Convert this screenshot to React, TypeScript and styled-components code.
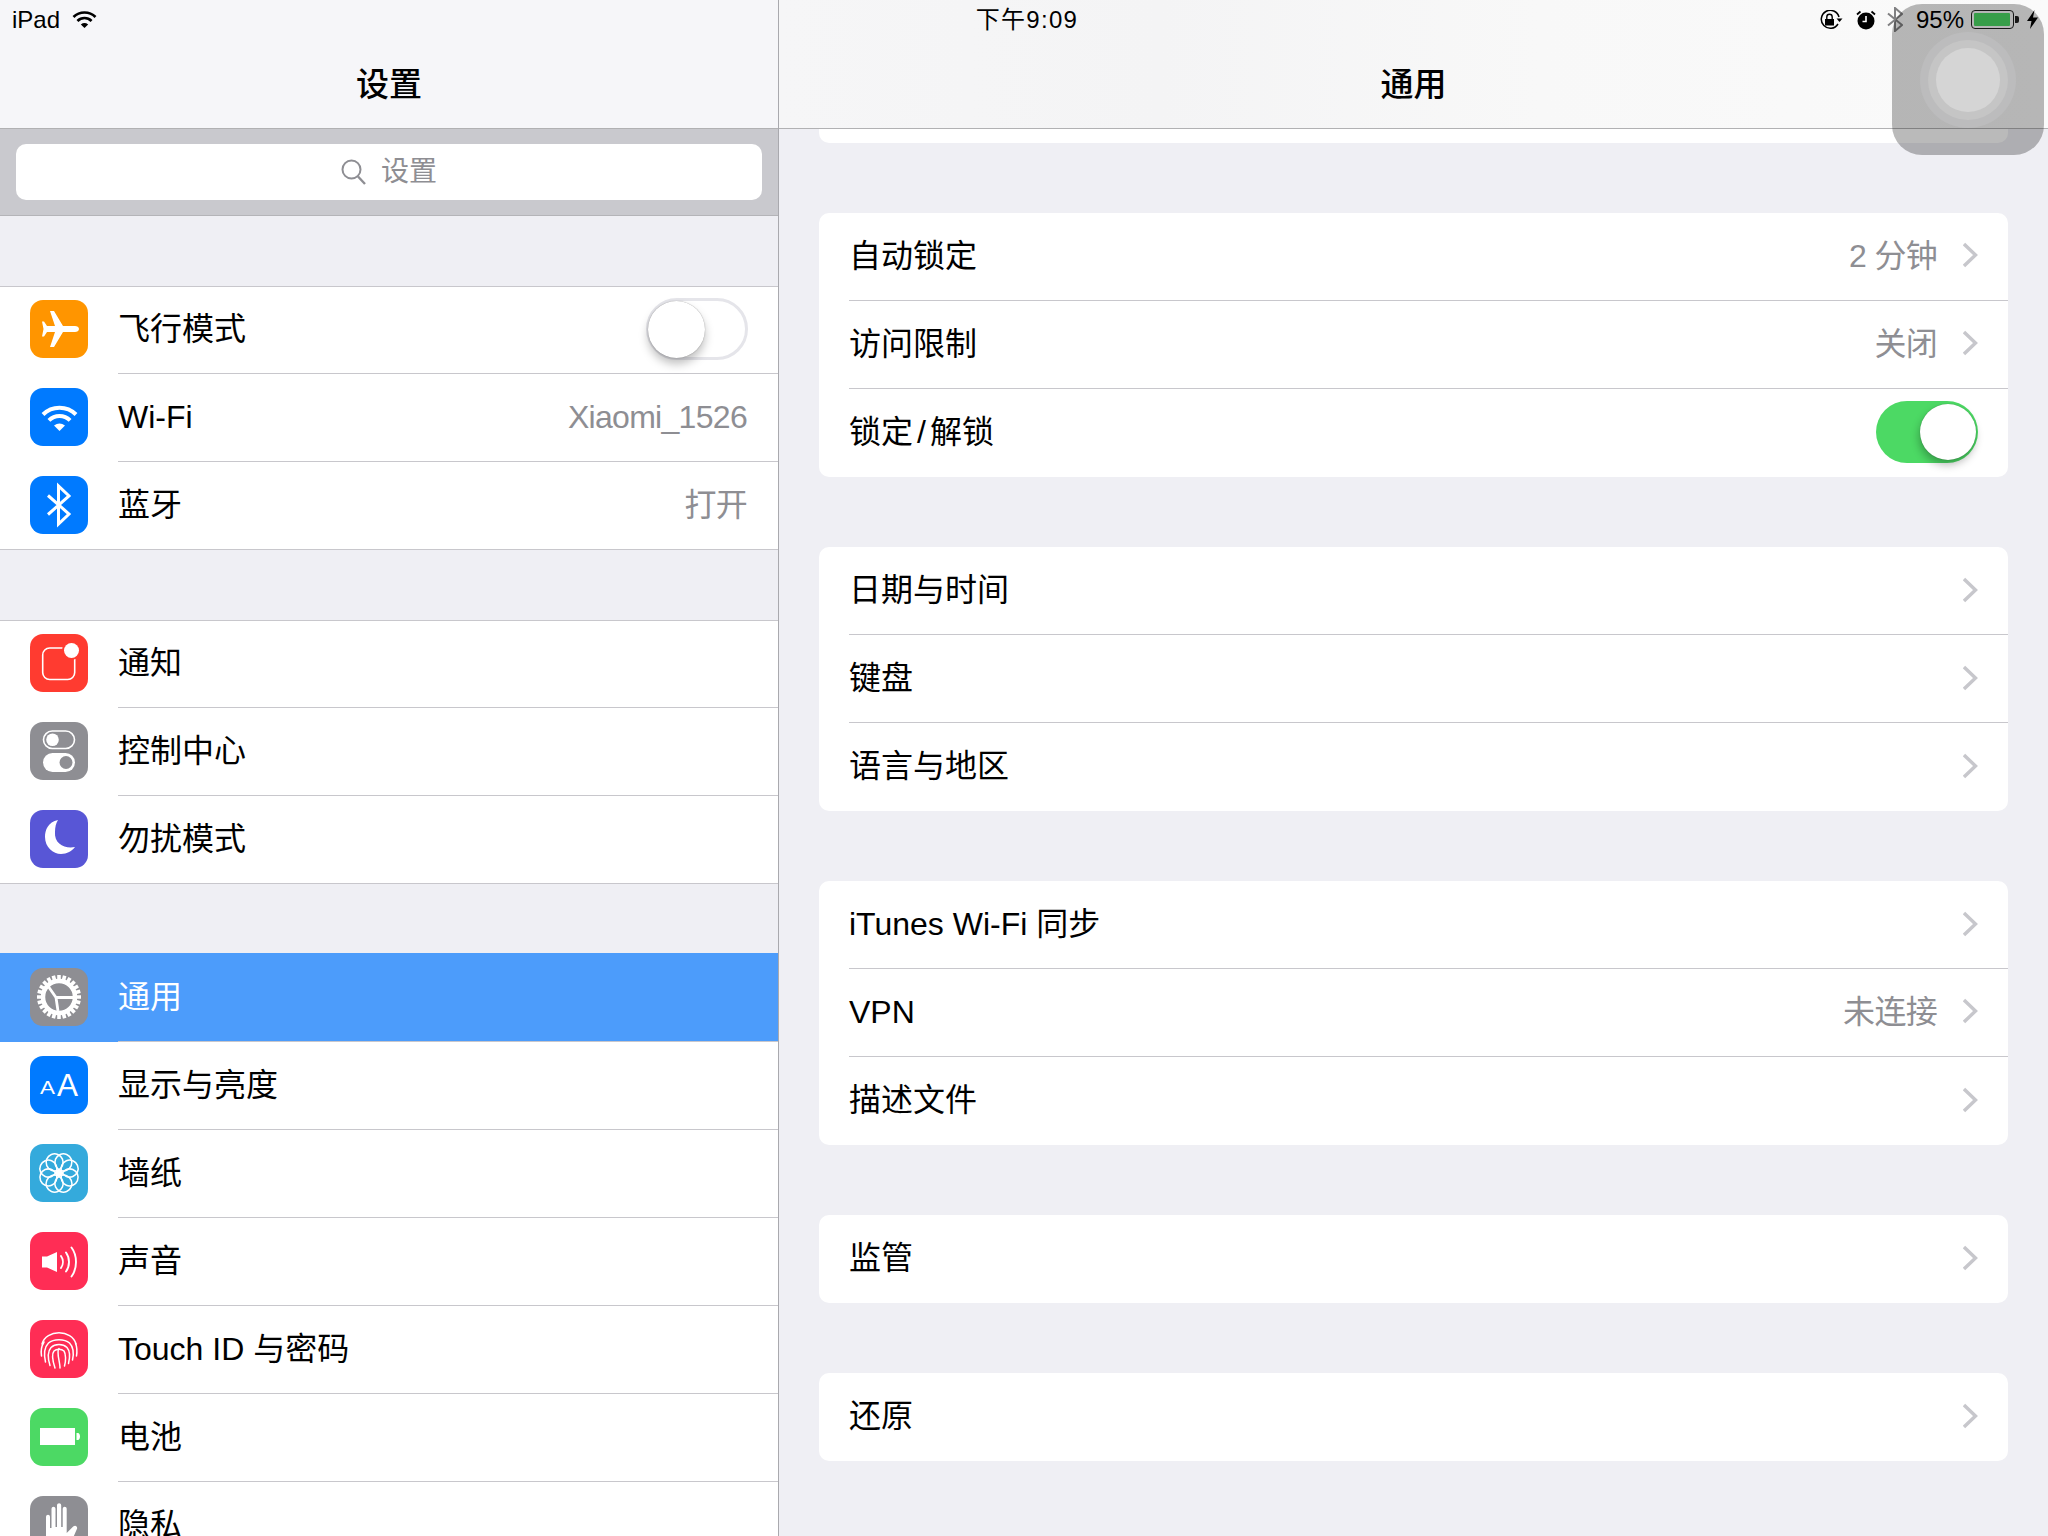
import React from 'react';
import styled, {createGlobalStyle} from 'styled-components';

const GlobalStyle = createGlobalStyle`
  * {
    box-sizing: border-box;
  }

  html, body {
    margin: 0;
    padding: 0;
    background: #efeff4;
  }

  body {
    font-family: "Liberation Sans", "Noto Sans CJK SC", sans-serif;
    line-height: 1.2;
    color: #000;
  }
`

const Screen = styled.div`
  position: relative;
  display: flex;
  width: 2048px;
  height: 1536px;
  overflow: hidden;
  background: #efeff4;
`

const Sidebar = styled.aside`
  flex: 0 0 779px;
  height: 100%;
  overflow: hidden;
  border-right: 1px solid #a9a9ae;
`

const Detail = styled.main`
  flex: 1;
  height: 100%;
  overflow: hidden;
`

const NavBar = styled.header<{$blur?: boolean}>`
  height: 129px;
  padding-top: 42px;
  display: flex;
  align-items: center;
  justify-content: center;
  border-bottom: 1px solid #b1b1b3;
  font-size: 33px;
  font-weight: 500;
  background: ${p => p.$blur
    ? 'linear-gradient(90deg, #f6f6f7 0%, #f4f4f5 30%, #f8f8f8 60%, #fafafa 100%)'
    : '#f6f6f9'};
`

const SearchBar = styled.div`
  height: 87px;
  padding: 15px 16px;
  background: #c9c9ce;
  border-bottom: 1px solid #b4b4b8;
`

const SearchField = styled.div`
  height: 56px;
  border-radius: 10px;
  background: #fff;
  display: flex;
  align-items: center;
  justify-content: center;
  gap: 15px;
  font-size: 28px;
  color: #8e8e93;
`

const SideList = styled.div`
  display: flex;
  flex-direction: column;
  gap: 70px;
  padding-top: 70px;
`

const Group = styled.section`
  background: #fff;
  box-shadow: inset 0 1px 0 #c8c7cc, inset 0 -1px 0 #c8c7cc;
`

const SideRow = styled.div<{$selected?: boolean}>`
  display: flex;
  align-items: center;
  height: ${p => p.$selected ? '89px' : '88px'};
  margin-top: ${p => p.$selected ? '-1px' : '0'};
  padding-left: 30px;
  gap: 30px;
  background: ${p => p.$selected ? '#4c9cfb' : 'transparent'};
  color: ${p => p.$selected ? '#fff' : '#000'};
`

const RowBody = styled.div<{$last?: boolean}>`
  flex: 1;
  align-self: stretch;
  display: flex;
  align-items: center;
  justify-content: space-between;
  padding-right: 30px;
  font-size: 32px;
  border-bottom: 1px solid ${p => p.$last ? 'transparent' : '#c8c7cc'};
`

const Slash = styled.span`
  margin: 0 4px;
`

const IconTile = styled.div<{$bg: string}>`
  flex: 0 0 58px;
  width: 58px;
  height: 58px;
  margin-bottom: 2px;
  border-radius: 13px;
  background: ${p => p.$bg};
  overflow: hidden;

  svg {
    display: block;
  }
`

const Value = styled.span`
  font-size: 32px;
  color: #8e8e93;
  letter-spacing: -0.7px;
  margin-right: 1px;
`

const Trailing = styled.div`
  display: flex;
  align-items: center;
  gap: 25px;

  svg {
    margin-bottom: 2px;
  }
`

const DetailList = styled.div`
  display: flex;
  flex-direction: column;
  gap: 70px;
  padding: 0 40px;
`

const Card = styled.section`
  background: #fff;
  border-radius: 10px;
  overflow: hidden;
`

const CardStub = styled.div`
  height: 14px;
  background: #fff;
  border-radius: 0 0 10px 10px;
`

const CardRow = styled.div`
  display: flex;
  height: 88px;
  padding-left: 30px;
`

const Track = styled.div<{$on?: boolean}>`
  display: flex;
  align-items: center;
  justify-content: ${p => p.$on ? 'flex-end' : 'flex-start'};
  width: 102px;
  height: 62px;
  margin-bottom: 1px;
  border-radius: 31px;
  padding: 0 2px;
  background: ${p => p.$on ? '#4cd964' : '#fff'};
  border: ${p => p.$on ? '0' : '3px solid #e5e5ea'};
`

const Knob = styled.div<{$on?: boolean}>`
  width: ${p => p.$on ? '56px' : '57px'};
  height: ${p => p.$on ? '56px' : '57px'};
  flex: none;
  border-radius: 50%;
  background: #fff;
  margin-left: ${p => p.$on ? '0' : '-3px'};
  box-shadow: ${p => p.$on
    ? '0 0 1px rgba(0,0,0,.35), -1px 5px 8px rgba(0,0,0,.28)'
    : '0 0 1px rgba(0,0,0,.45), 0 6px 10px rgba(0,0,0,.25)'};
`

const StatusBar = styled.div`
  position: absolute;
  top: 0;
  left: 0;
  width: 100%;
  height: 40px;
  display: grid;
  grid-template-columns: 1fr auto 1fr;
  align-items: center;
  padding: 0 10px 0 12px;
  font-size: 24px;
  color: #000;
`

const StatusLeft = styled.div`
  display: flex;
  align-items: center;
  gap: 12px;
`

const StatusTime = styled.div`
  margin-left: 4px;
  letter-spacing: 1.3px;
`

const StatusRight = styled.div`
  display: flex;
  align-items: center;
  justify-content: flex-end;
  gap: 11px;
`

const Percent = styled.span`
  margin-left: 2px;
`

const Battery = styled.div`
  display: flex;
  align-items: center;
  margin: 0 -3px 0 -4px;
`

const BatteryShell = styled.div`
  width: 43px;
  height: 19px;
  padding: 2px;
  border: 1.5px solid #222;
  border-radius: 4px;
`

const BatteryFill = styled.div`
  height: 100%;
  width: 97%;
  background: #4cd964;
  border-radius: 1px;
`

const BatteryNub = styled.div`
  width: 4px;
  height: 7px;
  background: #222;
  border-radius: 0 2px 2px 0;
  margin-left: 1px;
`

const AssistiveTouch = styled.div`
  position: absolute;
  top: 4px;
  right: 4px;
  width: 152px;
  height: 151px;
  border-radius: 30px;
  background: rgba(0, 0, 0, .27);
  display: flex;
  align-items: center;
  justify-content: center;
`

const TouchRing = styled.div<{$size: number; $fill: string}>`
  display: flex;
  align-items: center;
  justify-content: center;
  width: ${p => p.$size}px;
  height: ${p => p.$size}px;
  border-radius: 50%;
  background: ${p => p.$fill};
`

const Icon: React.FC<{children: React.ReactNode}> = ({children}) => (
    <svg width="58" height="58" viewBox="0 0 58 58" fill="none">{children}</svg>
)

const WifiArcs: React.FC<{color: string}> = ({color}) => (
    <>
        <path d="M13 26.5A23.4 23.4 0 0 1 46 26.5" stroke={color} strokeWidth="4"/>
        <path d="M18.9 32.4A15 15 0 0 1 40.1 32.4" stroke={color} strokeWidth="4"/>
        <path d="M29.5 43L24 37.6Q29.5 33.5 35 37.6Z" fill={color}/>
    </>
)

const Plane = () => (
    <Icon>
        <path fill="#fff" d="M49 29c0-2-2-3-4-3H33L24 11h-4l5 15h-8l-3-4.500h-2L13.500 29 12 36.500h2l3-4.500h8l-5 15h4l9-15h12c2 0 4-1 4-3z"/>
    </Icon>
)

const Wifi = () => <Icon><WifiArcs color="#fff"/></Icon>

const Bluetooth = () => (
    <Icon>
        <path d="M18 19.500L39 38 28.500 48V10L39 20 18 38.500" stroke="#fff" strokeWidth="3"/>
    </Icon>
)

const Notice = () => (
    <Icon>
        <rect x="12.700" y="14" width="32" height="31.500" rx="7" stroke="#fff" strokeWidth="1.600"/>
        <circle cx="41.500" cy="16.500" r="9.500" fill="#ff3b30"/>
        <circle cx="41.500" cy="16.500" r="7.500" fill="#fff"/>
    </Icon>
)

const Control = () => (
    <Icon>
        <rect x="13.500" y="9" width="31" height="17.500" rx="8.750" stroke="#fff" strokeWidth="1.600"/>
        <circle cx="22.500" cy="17.750" r="6.300" fill="#fff"/>
        <rect x="13" y="31" width="32" height="19" rx="9.500" fill="#fff"/>
        <circle cx="36" cy="40.500" r="6.500" fill="#8e8e93"/>
    </Icon>
)

const Moon = () => (
    <Icon>
        <path fill="#fff" d="M28 10C18 12 15 20 15 27c0 10 8 17 16 17 6 0 11-3 14-7-10 2-21-3-20-15 0-5 1-9 3-12z"/>
    </Icon>
)

const Gear = () => (
    <Icon>
        {Array.from({length: 24}, (_, i) => (
            <line key={i} x1="29" y1="7" x2="29" y2="13" stroke="#fff" strokeWidth="3.600"
                  transform={`rotate(${i * 15} 29 29)`}/>
        ))}
        <circle cx="29" cy="29" r="16" stroke="#fff" strokeWidth="4.500"/>
        <path d="M26 29.500L18 18M26 29.500H43M26 29.500L28 43" stroke="#fff" strokeWidth="2.800"/>
    </Icon>
)

const Letters = () => (
    <Icon>
        <text x="10" y="38" fill="#fff" fontSize="18" fontFamily="Liberation Sans"
              textLength="15" lengthAdjust="spacingAndGlyphs">A</text>
        <text x="27" y="40" fill="#fff" fontSize="32" fontFamily="Liberation Sans"
              textLength="21" lengthAdjust="spacingAndGlyphs">A</text>
    </Icon>
)

const Flower = () => (
    <Icon>
        {Array.from({length: 8}, (_, i) => (
            <circle key={i} cx="29" cy="17.500" r="8.500" stroke="#fff" strokeWidth="1.500"
                    transform={`rotate(${i * 45 + 22.5} 29 29)`}/>
        ))}
        <circle cx="29" cy="29" r="3.500" fill="#fff"/>
    </Icon>
)

const Speaker = () => (
    <Icon>
        <path fill="#fff" d="M12 24.500h5L27 20v20l-10-4.500h-5z"/>
        <path d="M31 24c2.500 3.500 2.500 8.500 0 12M36 20.500c4 5.500 4 13.500 0 19M41.500 15.500c6 8 6 21 0 29" stroke="#fff" strokeWidth="1.900" strokeLinecap="round"/>
    </Icon>
)

const Fingerprint = () => (
    <Icon>
        <g stroke="#fff" strokeWidth="1.500" strokeLinecap="round">
            <path d="M12 24c4-15 30-15 34 0"/>
            <path d="M11.500 36c-1-6 0-10 2.500-14M46.500 36c.800-5 .500-9-1-13"/>
            <path d="M15.500 42c-2-9-1-15 3-19 5-4.500 16-4.500 21 0 4 4 4.500 10 3 17"/>
            <path d="M20 45.500c-2.500-8-2.500-14 1-18 4-4 12-4 16 0 3 3.500 3 10 1.500 16"/>
            <path d="M25 48c-3-9-3.500-14-1-17 2.500-2.500 7.500-2.500 10 0 2 3 2 10 .500 15"/>
            <path d="M29 28.500c-3 3 1 13 1 19.500"/>
        </g>
    </Icon>
)

const BatteryIcon = () => (
    <Icon>
        <rect x="10" y="20" width="35" height="17" fill="#fff"/>
        <path fill="#fff" d="M46.500 25h1.500c1 0 2 1.500 2 3.500s-1 3.500-2 3.500h-1.500z"/>
    </Icon>
)

const Hand = () => (
    <Icon>
        <path fill="#fff" d="M16 58V21c0-3 4-3 4 0v11h1.500V13c0-3 4-3 4 0v18h1.500V9.500c0-3 4.200-3 4.200 0V31h1.500V13c0-3 4-3 4 0v24l6.500-6.500c2.500-2 5 .500 3.500 3L36 58z"/>
    </Icon>
)

const Chevron = () => (
    <svg width="15" height="26" viewBox="0 0 15 26" fill="none">
        <path d="M1 2L12.500 13 1 24" stroke="#c7c7cc" strokeWidth="3.400"/>
    </svg>
)

const SearchGlyph = () => (
    <svg width="25" height="26" viewBox="0 0 25 26" fill="none">
        <circle cx="10.500" cy="10.500" r="9" stroke="#8e8e93" strokeWidth="2"/>
        <path d="M17 17.500L24 25" stroke="#8e8e93" strokeWidth="2.400"/>
    </svg>
)

const StatusWifi = () => (
    <svg width="25" height="18" viewBox="11 17.500 37 27" fill="none"><WifiArcs color="#000"/></svg>
)

const RotationLock = () => (
    <svg width="24" height="20" viewBox="0 0 24 20" fill="none" style={{marginRight: 2}}>
        <path d="M20 7A9 9 0 1 0 19 14" stroke="#000" strokeWidth="1.500"/>
        <path d="M17.500 8.500h6L20.500 12z" fill="#000"/>
        <rect x="6" y="9" width="9" height="6.500" fill="#000"/>
        <path d="M7.800 9V7a2.700 2.700 0 0 1 5.400 0v2" stroke="#000" strokeWidth="1.400"/>
    </svg>
)

const Alarm = () => (
    <svg width="20" height="20" viewBox="0 0 20 20" fill="none">
        <circle cx="10" cy="11" r="8.500" fill="#000"/>
        <path d="M10 6v5.500H6.500" stroke="#fff" strokeWidth="1.600"/>
        <path d="M1 4.500L4.500 1.500M19 4.500L15.500 1.500" stroke="#000" strokeWidth="1.800"/>
    </svg>
)

const StatusBluetooth = () => (
    <svg width="16" height="25" viewBox="0 0 16 25" fill="none">
        <path d="M1 6.500L15 18 8 24V1l7 6L1 18.500" stroke="#808082" strokeWidth="2"/>
    </svg>
)

const Bolt = () => (
    <svg width="11" height="19" viewBox="0 0 11 19">
        <path fill="#000" d="M7.500 0L0 11h4.500L3 19l8-11.500H6z"/>
    </svg>
)

type SideItem = {
    label: string
    bg: string
    icon: React.ReactNode
    value?: string
    toggle?: boolean
    selected?: boolean
}

const sideGroups: SideItem[][] = [
    [
        {label: '飞行模式', bg: '#ff9500', icon: <Plane/>, toggle: true},
        {label: 'Wi-Fi', bg: '#007aff', icon: <Wifi/>, value: 'Xiaomi_1526'},
        {label: '蓝牙', bg: '#007aff', icon: <Bluetooth/>, value: '打开'},
    ],
    [
        {label: '通知', bg: '#ff3b30', icon: <Notice/>},
        {label: '控制中心', bg: '#8e8e93', icon: <Control/>},
        {label: '勿扰模式', bg: '#5856d6', icon: <Moon/>},
    ],
    [
        {label: '通用', bg: '#8e8e93', icon: <Gear/>, selected: true},
        {label: '显示与亮度', bg: '#007aff', icon: <Letters/>},
        {label: '墙纸', bg: '#34aadc', icon: <Flower/>},
        {label: '声音', bg: '#ff2d55', icon: <Speaker/>},
        {label: 'Touch ID 与密码', bg: '#ff2d55', icon: <Fingerprint/>},
        {label: '电池', bg: '#4cd964', icon: <BatteryIcon/>},
        {label: '隐私', bg: '#8e8e93', icon: <Hand/>},
    ],
]

type DetailItem = {
    label: React.ReactNode
    value?: string
    toggle?: boolean
}

const detailCards: DetailItem[][] = [
    [
        {label: '自动锁定', value: '2 分钟'},
        {label: '访问限制', value: '关闭'},
        {label: <>锁定<Slash>/</Slash>解锁</>, toggle: true},
    ],
    [
        {label: '日期与时间'},
        {label: '键盘'},
        {label: '语言与地区'},
    ],
    [
        {label: 'iTunes Wi-Fi 同步'},
        {label: 'VPN', value: '未连接'},
        {label: '描述文件'},
    ],
    [{label: '监管'}],
    [{label: '还原'}],
]

const App: React.FC = () => {
    return (
        <Screen lang="zh-CN">
            <GlobalStyle/>
            <Sidebar>
                <NavBar>设置</NavBar>
                <SearchBar>
                    <SearchField>
                        <SearchGlyph/>
                        <span>设置</span>
                    </SearchField>
                </SearchBar>
                <SideList>
                    {sideGroups.map((group, g) => (
                        <Group key={g}>
                            {group.map((item, i) => (
                                <SideRow key={item.label} $selected={item.selected}>
                                    <IconTile $bg={item.bg}>{item.icon}</IconTile>
                                    <RowBody $last={i === group.length - 1}>
                                        <span>{item.label}</span>
                                        {item.value && <Value>{item.value}</Value>}
                                        {item.toggle && <Track><Knob/></Track>}
                                    </RowBody>
                                </SideRow>
                            ))}
                        </Group>
                    ))}
                </SideList>
            </Sidebar>

            <Detail>
                <NavBar $blur>通用</NavBar>
                <DetailList>
                    <CardStub/>
                    {detailCards.map((card, c) => (
                        <Card key={c}>
                            {card.map((item, i) => (
                                <CardRow key={i}>
                                    <RowBody $last={i === card.length - 1}>
                                        <span>{item.label}</span>
                                        {item.toggle
                                            ? <Track $on><Knob $on/></Track>
                                            : <Trailing>
                                                {item.value && <Value>{item.value}</Value>}
                                                <Chevron/>
                                            </Trailing>}
                                    </RowBody>
                                </CardRow>
                            ))}
                        </Card>
                    ))}
                </DetailList>
            </Detail>

            <StatusBar>
                <StatusLeft>iPad <StatusWifi/></StatusLeft>
                <StatusTime>下午9:09</StatusTime>
                <StatusRight>
                    <RotationLock/>
                    <Alarm/>
                    <StatusBluetooth/>
                    <Percent>95%</Percent>
                    <Battery>
                        <BatteryShell><BatteryFill/></BatteryShell>
                        <BatteryNub/>
                    </Battery>
                    <Bolt/>
                </StatusRight>
            </StatusBar>

            <AssistiveTouch>
                <TouchRing $size={96} $fill="#bcbcbd">
                    <TouchRing $size={80} $fill="#c5c5c5">
                        <TouchRing $size={64} $fill="#d5d5d5"/>
                    </TouchRing>
                </TouchRing>
            </AssistiveTouch>
        </Screen>
    );
}

export default App
